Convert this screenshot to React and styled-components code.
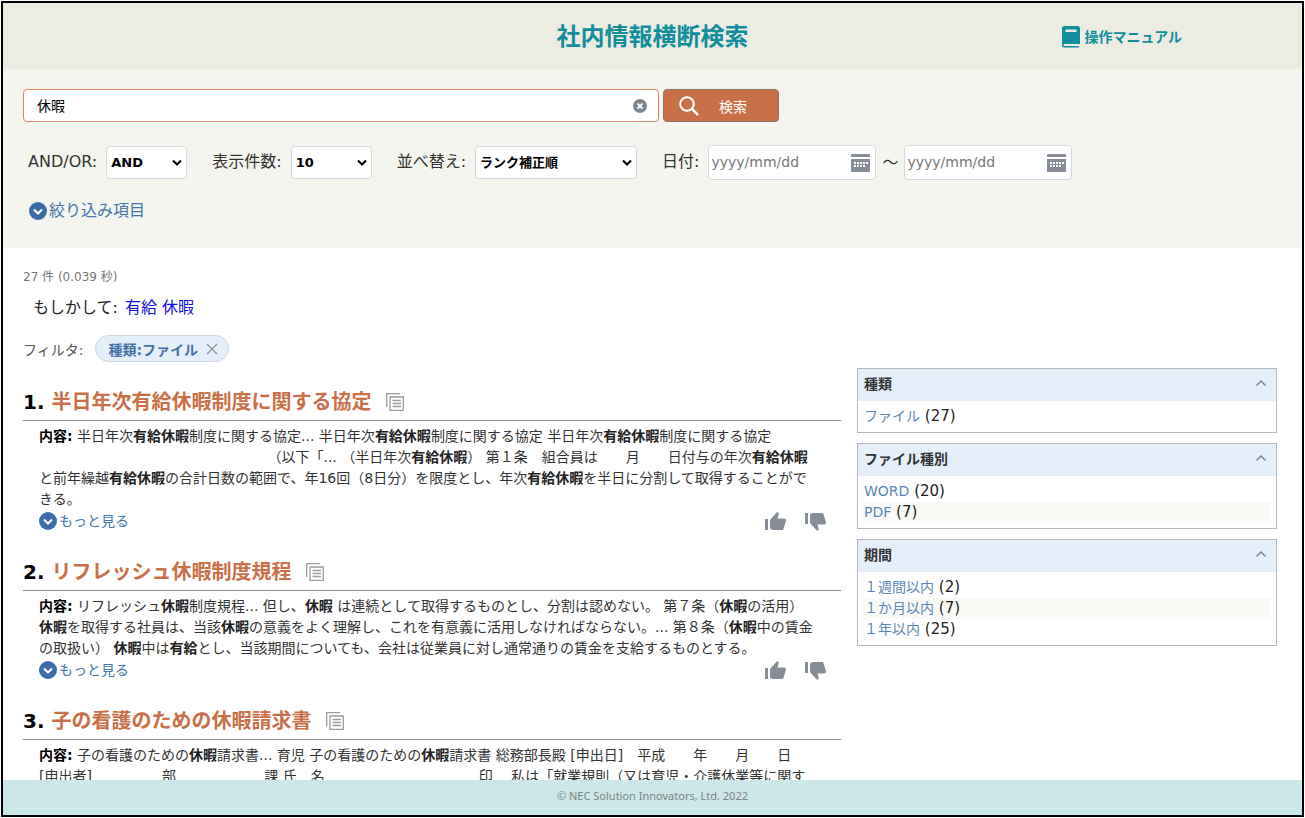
import React, { useState } from 'react';
import styled, { createGlobalStyle } from 'styled-components';

const GlobalStyle = createGlobalStyle`
  * {
    box-sizing: border-box;
  }
  body {
    margin: 0;
    background: #fff;
    font-family: 'DejaVu Sans', 'Noto Sans CJK JP', sans-serif;
    font-size: 14px;
    color: #333;
  }
  button, input, select {
    font-family: inherit;
  }
  button {
    padding: 0;
    border: 0;
    background: none;
    cursor: pointer;
  }
  a {
    text-decoration: none;
  }
  svg {
    display: block;
    flex: none;
  }
`;

const Page = styled.div`
  display: flex;
  flex-direction: column;
  height: calc(100vh - 2px);
  margin: 1px 1px 0;
  border: 2px solid #000;
`;

const Header = styled.header`
  flex: none;
  display: grid;
  grid-template-columns: 1fr auto 1fr;
  align-items: center;
  height: 66px;
  padding-top: 1px;
  background: #ecece2;
`;

const Title = styled.h1`
  grid-column: 2;
  margin: 0;
  font-size: 24px;
  line-height: 32px;
  color: #108e9c;
`;

const ManualLink = styled.a`
  display: flex;
  align-items: center;
  justify-content: flex-end;
  gap: 4px;
  padding-right: 120px;
  font-size: 14px;
  line-height: 20px;
  font-weight: bold;
  color: #108e9c;
`;

const SearchForm = styled.form`
  flex: none;
  height: 179px;
  padding: 20px;
  background: #f4f5ee;
`;

const SearchRow = styled.div`
  display: flex;
  gap: 4px;
`;

const KeywordBox = styled.div`
  display: flex;
  align-items: center;
  flex: 0 1 636px;
  height: 33px;
  padding: 0 11px 0 13px;
  background: #fff;
  border: 1px solid #dc8768;
  border-radius: 4px;
`;

const KeywordInput = styled.input`
  flex: 1;
  min-width: 0;
  padding: 0 0 2px;
  border: 0;
  outline: 0;
  font-size: 14px;
  color: #000;
`;

const SearchButton = styled.button`
  display: flex;
  align-items: center;
  gap: 20px;
  width: 116px;
  height: 33px;
  padding-left: 15px;
  background: #ca7048;
  border: 1px solid #8b7466;
  border-radius: 4px;
  font-size: 14px;
  color: #fff;
`;

const OptionRow = styled.div`
  display: flex;
  align-items: center;
  gap: 25px;
  margin-top: 23px;
  padding-left: 5px;
`;

const Option = styled.div`
  display: flex;
  align-items: center;
  gap: 9px;
  font-size: 16px;
  line-height: 24px;

  label {
    padding-bottom: 2px;
  }
`;

const DateRange = styled.div`
  display: flex;
  align-items: center;
  gap: 6px;
`;

const SelectWrap = styled.div`
  position: relative;

  svg {
    position: absolute;
    right: 4px;
    top: 13px;
    pointer-events: none;
  }
`;

const Select = styled.select`
  appearance: none;
  display: block;
  width: ${props => props.$wide ? '162px' : '81px'};
  height: 33px;
  padding: 0 4px;
  background: #fff;
  border: 1px solid #d8d9dc;
  border-radius: 4px;
  font-size: 13px;
  font-weight: bold;
  color: #000;
`;

const DateBox = styled.div`
  display: flex;
  align-items: center;
  width: 168px;
  height: 35px;
  padding: 0 5px 0 2px;
  background: #fff;
  border: 1px solid #d8d9e0;
  border-radius: 4px;
`;

const DateInput = styled.input`
  flex: 1;
  min-width: 0;
  padding: 0 0 2px;
  border: 0;
  outline: 0;
  font-size: 14px;

  &::placeholder {
    color: #777;
    opacity: 1;
  }
`;

const OpenButton = styled.button`
  display: flex;
  align-items: center;
  gap: 2px;
  margin-top: ${props => props.$large ? '19px' : '0'};
  margin-left: ${props => props.$large ? '6px' : '0'};
  font-size: ${props => props.$large ? '16px' : '14px'};
  line-height: 24px;
  color: #4576ae;
`;

const Main = styled.main`
  flex: 1;
  min-height: 0;
  overflow: hidden;
  padding: 19px 25px 0 20px;
`;

const Count = styled.p`
  margin: 0;
  font-size: 12px;
  line-height: 20px;
  color: #777;
`;

const Suggest = styled.p`
  margin: 8px 0 0 10px;
  font-size: 16px;
  line-height: 26px;
  color: #222;

  a {
    margin-left: 2px;
    color: #1111dd;
  }
`;

const FilterRow = styled.div`
  display: flex;
  align-items: center;
  gap: 12px;
  height: 27px;
  margin-top: 14px;
  color: #555;
`;

const Chip = styled.button`
  display: flex;
  align-items: center;
  gap: 8px;
  height: 27px;
  padding: 0 10px 0 12px;
  background: #e4eff9;
  border: 1px solid #ccd6e2;
  border-radius: 14px;
  font-size: 14px;
  font-weight: bold;
  color: #426fa5;
`;

const Columns = styled.div`
  display: grid;
  grid-template-columns: minmax(0, 1fr) 420px;
  gap: 16px;
  align-items: start;
  margin-top: 6px;
`;

const Results = styled.div`
  display: flex;
  flex-direction: column;
  gap: 24px;
  padding-top: 18px;
`;

const ResultHead = styled.div`
  display: flex;
  align-items: center;
  gap: 15px;
  height: 35px;
  padding-bottom: 3px;
  border-bottom: 1px solid #8d8d8d;
`;

const ResultTitle = styled.h2`
  margin: 0;
  font-size: 20px;
  line-height: 30px;
  color: #000;

  a {
    color: #ca7048;
  }
`;

const ResultText = styled.p`
  margin: 5px 0 0 16px;
  font-size: 14px;
  line-height: 21px;
  white-space: pre-wrap;

  b {
    color: #222;
  }
`;

const TextLine = styled.span`
  display: block;
  height: 21px;
`;

const FieldName = styled.strong`
  color: #000;
`;

const ResultFoot = styled.div`
  display: flex;
  align-items: center;
  justify-content: space-between;
  height: 22px;
  padding: 0 15px 0 16px;
`;

const Votes = styled.div`
  display: flex;
  gap: 19px;
`;

const Side = styled.aside`
  display: flex;
  flex-direction: column;
  gap: 10px;
`;

const Facet = styled.section`
  border: 1px solid #b4b7ba;
`;

const FacetHead = styled.button`
  display: flex;
  align-items: center;
  justify-content: space-between;
  width: 100%;
  height: 32px;
  padding: 0 9px 4px 6px;
  background: #e4eff9;
  font-size: 14px;
  font-weight: bold;
  color: #333;
`;

const FacetList = styled.ul`
  margin: 0;
  padding: 5px;
  list-style: none;
`;

const FacetItem = styled.li`
  height: 21px;
  padding-left: 1px;
  font-size: 15px;
  line-height: 21px;
  color: #222;

  &:nth-child(even) {
    background: #f9faf5;
  }
  a {
    font-size: 14px;
    color: #5c86b7;
  }
`;

const Footer = styled.footer`
  flex: none;
  height: 35px;
  background: #cbe7e7;
  font-family: 'Noto Sans', sans-serif;
  font-size: 11px;
  line-height: 31px;
  text-align: center;
  color: #7b8586;
`;

function BookIcon() {
  return (
    <svg width="18" height="22" viewBox="0 0 18 22">
      <path d="M2.500 0h13A2.500 2.500 0 0 1 18 2.500V18H2.500a1 1 0 0 0 0 2H17v1.500H2.500A2.500 2.500 0 0 1 0 19V2.500A2.500 2.500 0 0 1 2.500 0z" fill="#108e9c" />
      <path d="M3.500 3.500h11V6h-11z" fill="#ecece2" />
    </svg>
  );
}

function ClearIcon() {
  return (
    <svg width="14" height="14" viewBox="0 0 14 14">
      <circle cx="7" cy="7" r="7" fill="#7d858f" />
      <path d="M4.500 4.500l5 5M9.500 4.500l-5 5" stroke="#fff" strokeWidth="2" />
    </svg>
  );
}

function SearchIcon() {
  return (
    <svg width="20" height="20" viewBox="0 0 20 20" fill="none" stroke="#fff" strokeWidth="2">
      <circle cx="8" cy="8" r="6.800" />
      <path d="M12.700 12.700L19 19" strokeWidth="2.500" />
    </svg>
  );
}

function ArrowIcon() {
  return (
    <svg width="12" height="8" viewBox="0 0 12 8" fill="none" stroke="#000" strokeWidth="2">
      <path d="M2 1.500l4 4 4-4" />
    </svg>
  );
}

function CalendarIcon() {
  return (
    <svg width="19" height="18" viewBox="0 0 19 18">
      <path d="M1 0h17a1 1 0 0 1 1 1v2H0V1a1 1 0 0 1 1-1zM0 5h19v12a1 1 0 0 1-1 1H1a1 1 0 0 1-1-1z" fill="#868d96" />
      <path d="M3 8h2v2H3zM6 8h2v2H6zM9 8h2v2H9zM12 8h2v2h-2zM15 8h2v2h-2zM3 11h2v2H3zM6 11h2v2H6zM9 11h2v2H9zM12 11h2v2h-2z" fill="#fff" />
    </svg>
  );
}

function CircleDownIcon() {
  return (
    <svg width="18" height="18" viewBox="0 0 18 18">
      <circle cx="9" cy="9" r="9" fill="#3c6ca8" />
      <path d="M5 7.500l4 4 4-4" fill="none" stroke="#fff" strokeWidth="2" />
    </svg>
  );
}

function CloseIcon() {
  return (
    <svg width="12" height="12" viewBox="0 0 12 12" stroke="#8a9098" strokeWidth="1.200">
      <path d="M1 1l10 10M11 1L1 11" />
    </svg>
  );
}

function CopyIcon() {
  return (
    <svg width="18" height="18" viewBox="0 0 18 18" fill="none" stroke="#999da1" strokeWidth="1.300">
      <path d="M.700 14V.700H14" />
      <path d="M4 4h13.300v13.300H4zM6.500 7.500h8.500M6.500 10.500h8.500M6.500 13.500h8.500" />
    </svg>
  );
}

function ThumbIcon(props) {
  return (
    <svg width="21" height="19" viewBox="0 0 21 19" fill="#868d96">
      <g transform={props.down ? 'translate(0 19) scale(1 -1)' : undefined}>
        <path d="M0 7h3v11H0zM5 8l6.500-7.300c.500-.600 1.500-.500 2 .300.300.600.300 1 .100 1.600L12.500 6.500H19c1.200 0 2 .800 2 2L18.500 17c-.300.700-.900 1-1.500 1H7.500L5 16.500z" />
      </g>
    </svg>
  );
}

function UpIcon() {
  return (
    <svg width="12" height="8" viewBox="0 0 12 8" fill="none" stroke="#7d858f" strokeWidth="1.500">
      <path d="M1.500 6.500L6 2l4.500 4.500" />
    </svg>
  );
}

// * で囲んだ部分は検索語として太字にする
const results = [
  {
    title: '半日年次有給休暇制度に関する協定',
    lines: [
      '半日年次*有給休暇*制度に関する協定... 半日年次*有給休暇*制度に関する協定 半日年次*有給休暇*制度に関する協定',
      '　　　　　　　　　　　　　　　　 （以下「... （半日年次*有給休暇*） 第１条　組合員は　　月　　日付与の年次*有給休暇*',
      'と前年繰越*有給休暇*の合計日数の範囲で、年16回（8日分）を限度とし、年次*有給休暇*を半日に分割して取得することがで',
      'きる。',
    ],
  },
  {
    title: 'リフレッシュ休暇制度規程',
    lines: [
      'リフレッシュ*休暇*制度規程... 但し、*休暇* は連続として取得するものとし、分割は認めない。 第７条（*休暇*の活用）',
      '*休暇*を取得する社員は、当該*休暇*の意義をよく理解し、これを有意義に活用しなければならない。... 第８条（*休暇*中の賃金',
      'の取扱い） *休暇*中は*有給*とし、当該期間についても、会社は従業員に対し通常通りの賃金を支給するものとする。',
    ],
  },
  {
    title: '子の看護のための休暇請求書',
    lines: [
      '子の看護のための*休暇*請求書... 育児 子の看護のための*休暇*請求書 総務部長殿 [申出日]　平成　　年　　月　　日',
      '[申出者]　　　　　部　　　　　　 課 氏　名　　　　　　　　　　　印　 私は「就業規則（又は育児・介護休業等に関す',
    ],
  },
];

const facets = [
  { name: '種類', items: [['ファイル', 27]] },
  { name: 'ファイル種別', items: [['WORD', 20], ['PDF', 7]] },
  { name: '期間', items: [['１週間以内', 2], ['１か月以内', 7], ['１年以内', 25]] },
];

function SelectOption(props) {
  return (
    <Option>
      <label htmlFor={props.id}>{props.label}</label>
      <SelectWrap>
        <Select id={props.id} $wide={props.wide}>
          {props.items.map((item) => <option key={item}>{item}</option>)}
        </Select>
        <ArrowIcon />
      </SelectWrap>
    </Option>
  );
}

function DateField(props) {
  return (
    <DateBox>
      <DateInput id={props.id} placeholder="yyyy/mm/dd" aria-label={props.label} />
      <button type="button" aria-label="カレンダー"><CalendarIcon /></button>
    </DateBox>
  );
}

function Result(props) {
  return (
    <article>
      <ResultHead>
        <ResultTitle>{props.no}. <a href="#">{props.result.title}</a></ResultTitle>
        <button type="button" aria-label="コピー"><CopyIcon /></button>
      </ResultHead>
      <ResultText>
        {props.result.lines.map((line, n) => (
          <TextLine key={n}>
            {n === 0 ? <><FieldName>内容:</FieldName>{' '}</> : null}
            {line.split('*').map((part, i) => (
              i % 2 === 1 ? <b key={i}>{part}</b> : part
            ))}
          </TextLine>
        ))}
      </ResultText>
      <ResultFoot>
        <OpenButton type="button"><CircleDownIcon />もっと見る</OpenButton>
        <Votes>
          <button type="button" aria-label="良い"><ThumbIcon /></button>
          <button type="button" aria-label="悪い"><ThumbIcon down /></button>
        </Votes>
      </ResultFoot>
    </article>
  );
}

function App() {
  const [keyword, setKeyword] = useState('休暇');
  const [closed, setClosed] = useState([]);

  function toggle(name) {
    setClosed(closed.includes(name) ? closed.filter((x) => x !== name) : [...closed, name]);
  }

  return (
    <Page>
      <GlobalStyle />
      <Header>
        <Title>社内情報横断検索</Title>
        <ManualLink href="#"><BookIcon />操作マニュアル</ManualLink>
      </Header>

      <SearchForm onSubmit={(e) => e.preventDefault()}>
        <SearchRow>
          <KeywordBox>
            <KeywordInput aria-label="キーワード" value={keyword} onChange={(e) => setKeyword(e.target.value)} />
            <button type="button" aria-label="クリア" onClick={() => setKeyword('')}><ClearIcon /></button>
          </KeywordBox>
          <SearchButton type="submit"><SearchIcon />検索</SearchButton>
        </SearchRow>
        <OptionRow>
          <SelectOption id="andor" label="AND/OR:" items={['AND', 'OR']} />
          <SelectOption id="rows" label="表示件数:" items={['10', '20', '50']} />
          <SelectOption id="sort" label="並べ替え:" items={['ランク補正順', '日付順']} wide />
          <Option>
            <label htmlFor="from">日付:</label>
            <DateRange>
              <DateField id="from" label="開始日" />
              ～
              <DateField id="to" label="終了日" />
            </DateRange>
          </Option>
        </OptionRow>
        <OpenButton type="button" $large><CircleDownIcon />絞り込み項目</OpenButton>
      </SearchForm>

      <Main>
        <Count>27 件 (0.039 秒)</Count>
        <Suggest>もしかして: <a href="#">有給 休暇</a></Suggest>
        <FilterRow>
          フィルタ:
          <Chip type="button">種類:ファイル<CloseIcon /></Chip>
        </FilterRow>
        <Columns>
          <Results>
            {results.map((result, i) => <Result key={result.title} no={i + 1} result={result} />)}
          </Results>
          <Side>
            {facets.map((facet) => (
              <Facet key={facet.name}>
                <FacetHead type="button" onClick={() => toggle(facet.name)}>{facet.name}<UpIcon /></FacetHead>
                {closed.includes(facet.name) ? null : (
                  <FacetList>
                    {facet.items.map(([name, count]) => (
                      <FacetItem key={name}><a href="#">{name}</a> ({count})</FacetItem>
                    ))}
                  </FacetList>
                )}
              </Facet>
            ))}
          </Side>
        </Columns>
      </Main>

      <Footer>© NEC Solution Innovators, Ltd. 2022</Footer>
    </Page>
  );
}

export default App;
